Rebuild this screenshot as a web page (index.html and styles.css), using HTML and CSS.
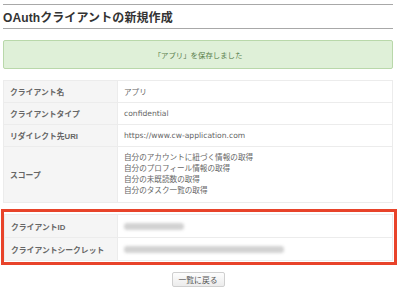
FILE: index.html
```html
<!DOCTYPE html>
<html lang="ja">
<head>
<meta charset="utf-8">
<link rel="stylesheet" href="styles.css">
</head>
<body>
<div class="page">
  <div class="title-bar"><h1 class="title">OAuthクライアントの新規作成</h1></div>
  <div class="alert">「アプリ」を保存しました</div>
  <table class="info">
    <tr class="row"><th class="label">クライアント名</th><td class="value">アプリ</td></tr>
    <tr class="row"><th class="label">クライアントタイプ</th><td class="value">confidential</td></tr>
    <tr class="row"><th class="label">リダイレクト先URI</th><td class="value">https://www.cw-application.com</td></tr>
    <tr class="row scope"><th class="label">スコープ</th><td class="value scope-list">自分のアカウントに紐づく情報の取得<br>自分のプロフィール情報の取得<br>自分の未既読数の取得<br>自分のタスク一覧の取得</td></tr>
  </table>
  <div class="highlight">
    <table class="info">
      <tr class="row"><th class="label">クライアントID</th><td class="value"><span class="blur blur-id"></span></td></tr>
      <tr class="row"><th class="label">クライアントシークレット</th><td class="value"><span class="blur blur-secret"></span></td></tr>
    </table>
  </div>
  <div class="actions"><button class="btn" type="button">一覧に戻る</button></div>
</div>
</body>
</html>
```
FILE: styles.css
```css
html, body {
  margin: 0;
  padding: 0;
  background: #fff;
}
body {
  font-family: "Liberation Sans", "Noto Sans CJK JP", sans-serif;
  color: #555;
}
.page {
  padding: 4px 7px 0 3px;
}
.title-bar {
  border-top: 1px solid #a8a8a8;
  border-bottom: 1px solid #a8a8a8;
  height: 23px;
  display: flex;
  align-items: center;
}
.title {
  margin: 0;
  font-size: 12px;
  font-weight: bold;
  color: #333;
  letter-spacing: 0.1px;
}
.alert {
  margin-top: 11px;
  height: 27px;
  border: 1px solid #b9d8aa;
  border-radius: 2px;
  background: #dff0d8;
  color: #5a7f4c;
  font-size: 7.4px;
  display: flex;
  align-items: center;
  justify-content: center;
}
.info {
  width: 100%;
  table-layout: fixed;
  border-collapse: collapse;
  border: 1px solid #ececec;
  margin-top: 11px;
}
.label, .value {
  font-size: 7.8px;
  text-align: left;
  padding: 0 6px;
  height: 21px;
  border-top: 1px solid #ececec;
  vertical-align: middle;
  overflow: hidden;
  white-space: nowrap;
}
.label {
  width: 101px;
  background: #f5f5f5;
  font-weight: bold;
  color: #666;
  border-right: 1px solid #ececec;
}
.value {
  color: #666;
  font-weight: normal;
  font-family: "DejaVu Sans", "Noto Sans CJK JP", sans-serif;
  font-size: 7.6px;
}
.scope-list {
  line-height: 11px;
  padding-top: 5px;
  padding-bottom: 6px;
  height: auto;
}
.highlight {
  margin: 6px -4px 0 -2px;
  border: 3px solid #e8432a;
  padding: 2px 0 1px 0;
}
.highlight .info {
  margin: 0;
  width: calc(100% - 1px);
}
.highlight .label {
  width: 100px;
  height: 22px;
}
.highlight .value {
  height: 22px;
}
.blur {
  display: block;
  height: 7px;
  background: #d2d2d2;
  border-radius: 3px;
  filter: blur(1.5px);
}
.blur-id {
  width: 60px;
}
.blur-secret {
  width: 160px;
}
.actions {
  margin-top: 7px;
  display: flex;
  justify-content: center;
}
.btn {
  width: 53px;
  height: 15px;
  padding: 0;
  font-family: "Liberation Sans", "Noto Sans CJK JP", sans-serif;
  font-size: 7.8px;
  color: #555;
  border: 1px solid #cfcfcf;
  border-radius: 2px;
  background: linear-gradient(#fdfdfd, #ececec);
}
```
